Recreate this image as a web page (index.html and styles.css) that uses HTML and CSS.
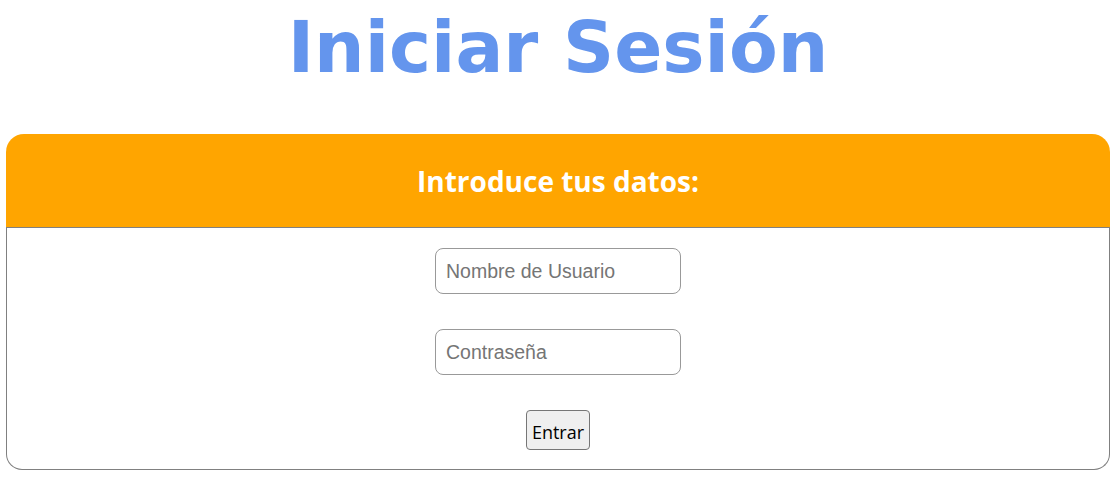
FILE: index.html
```html
<!DOCTYPE html>
<html lang="es">
<head>
<meta charset="utf-8">
<title>Iniciar Sesión</title>
<link rel="stylesheet" href="styles.css">
</head>
<body>
<h1 class="title">Iniciar Sesión</h1>
<div class="card">
  <div class="card-head">Introduce tus datos:</div>
  <form class="card-body">
    <input class="field" type="text" placeholder="Nombre de Usuario">
    <input class="field" type="password" placeholder="Contraseña">
    <button class="btn" type="button">Entrar</button>
  </form>
</div>
</body>
</html>
```
FILE: styles.css
```css
html, body {
  margin: 0;
  padding: 0;
  background: #fff;
}
body {
  padding: 0 5px 0 6px;
}
.title {
  margin: 0;
  height: 134px;
  padding-top: 4px;
  box-sizing: border-box;
  text-align: center;
  font-family: "DejaVu Sans", Verdana, sans-serif;
  font-weight: bold;
  font-size: 71px;
  line-height: 88px;
  color: #6495ed;
}
.card-head {
  height: 93px;
  background: #ffa500;
  border-radius: 18px 18px 0 0;
  border-bottom: 1px solid #808080;
  display: flex;
  align-items: center;
  justify-content: center;
  color: #fff;
  font-family: "Open Sans", sans-serif;
  font-weight: bold;
  font-size: 28px;
}
.card-body {
  margin: 0;
  border: 1px solid #808080;
  border-top: none;
  border-radius: 0 0 16px 16px;
  height: 242px;
  box-sizing: border-box;
  padding-top: 20px;
  display: flex;
  flex-direction: column;
  align-items: center;
  gap: 35px;
}
.field {
  width: 246px;
  height: 46px;
  box-sizing: border-box;
  border: 1px solid #999;
  border-radius: 8px;
  padding: 0 10px;
  font-family: "Liberation Sans", Arial, sans-serif;
  font-size: 19.5px;
  color: #333;
  outline: none;
}
.field::placeholder {
  color: #757575;
}
.btn {
  margin-top: 0;
  width: 64px;
  height: 40px;
  box-sizing: border-box;
  background: #efefef;
  border: 1px solid #767676;
  border-radius: 4px;
  font-family: "Open Sans", sans-serif;
  font-size: 18px;
  color: #000;
  padding: 3px 0 0;
}
```
